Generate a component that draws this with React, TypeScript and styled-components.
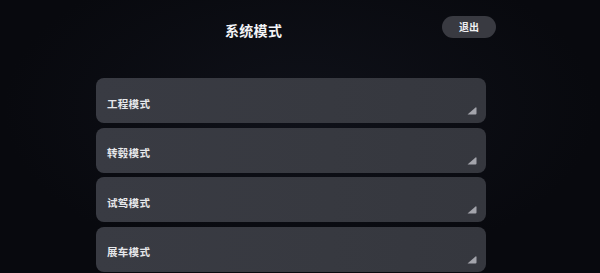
import styled, { createGlobalStyle } from "styled-components"

const GlobalStyle = createGlobalStyle`
  html, body {
    margin: 0;
    padding: 0;
    background: #08090e;
  }
  body {
    font-family: "Noto Sans CJK SC", "Noto Sans", sans-serif;
  }
`

const Page = styled.div`
  width: 600px;
  height: 273px;
  overflow: hidden;
  background: radial-gradient(ellipse at 50% 40%, #0f1119 0%, #08090e 70%);
  display: flex;
  flex-direction: column;
`

const Header = styled.div`
  height: 78px;
  display: flex;
  align-items: flex-start;
  justify-content: space-between;
  padding: 0 104px 0 225px;
  box-sizing: border-box;
`

const Title = styled.div`
  margin-top: 19px;
  color: #f2f3f6;
  font-size: 14px;
  font-weight: 700;
  letter-spacing: 0.3px;
  line-height: 22px;
`

const ExitButton = styled.button`
  margin-top: 16px;
  width: 54px;
  height: 22px;
  border: none;
  border-radius: 11px;
  background: #393a41;
  color: #f0f0f2;
  font-family: inherit;
  font-size: 10px;
  font-weight: 700;
  padding: 0;
  line-height: 22px;
`

const List = styled.div`
  display: flex;
  flex-direction: column;
  gap: 4.5px;
  padding: 0 114px 0 96px;
`

const Card = styled.div`
  height: 45px;
  border-radius: 8px;
  background: linear-gradient(90deg, #393b43 0%, #373940 60%, #35373e 100%);
  display: flex;
  align-items: center;
  padding: 0 9px 0 11px;
  box-sizing: border-box;
`

const Label = styled.span`
  margin-top: 5px;
  color: #e6e7ea;
  font-size: 10.5px;
  font-weight: 700;
  letter-spacing: 0.3px;
`

const Corner = styled.svg`
  margin-left: auto;
  align-self: flex-end;
  margin-bottom: 8px;
`

const modes = ["工程模式", "转毂模式", "试驾模式", "展车模式"]

export default function App() {
  return (
    <>
      <GlobalStyle />
      <Page>
        <Header>
          <Title>系统模式</Title>
          <ExitButton>退出</ExitButton>
        </Header>
        <List>
          {modes.map((m) => (
            <Card key={m}>
              <Label>{m}</Label>
              <Corner width="10" height="8" viewBox="0 0 10 8">
                <path d="M0.5 7.5 L8.5 0.5 Q9.5 0 9.5 1.2 L9.5 6.5 Q9.5 7.5 8.5 7.5 Z" fill="#a3a4ab" />
              </Corner>
            </Card>
          ))}
        </List>
      </Page>
    </>
  )
}
